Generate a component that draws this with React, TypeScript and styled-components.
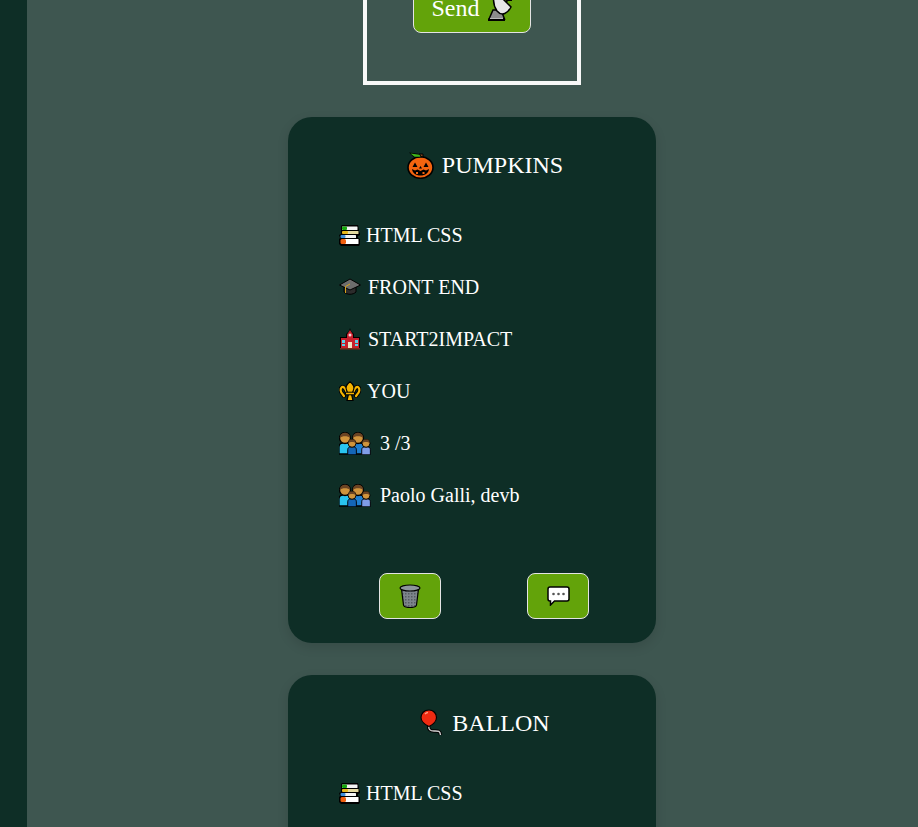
import React from "react";
import styled, { createGlobalStyle } from "styled-components";

const GlobalStyle = createGlobalStyle`
  html, body {
    margin: 0;
    padding: 0;
    height: 100%;
    overflow: hidden;
    background: #3e5650;
  }
`;

const Pumpkin = () => (
  <svg width="27" height="27" viewBox="0 0 27 27">
    <path d="M12 2h4v5h-4z" fill="#7c4a22" stroke="#000" />
    <ellipse cx="13.5" cy="15.500" rx="12.500" ry="10.800" fill="#f4640f" stroke="#000" strokeWidth="1.600" />
    <path d="M2 .5l11 1.500 2 3.500H7z" fill="#000" />
    <path d="M3.500 1.500l9 1.300 1 2H7.500z" fill="#3fb51a" />
    <path d="M8 10.500l2.500 4.500h-5zM19 10.500l2.500 4.500h-5zM13.500 14l1.500 2.500h-3z" fill="#000" />
    <path d="M5 17l3 1.500 2.500-1 3 1.500 3-1.500 2.500 1 3-1.500c-.5 4-3.500 6.500-8.500 6.500S5.500 21 5 17z" fill="#000" />
    <path d="M9 20h2v2H9zM15.500 20h2v2h-2z" fill="#f4640f" />
  </svg>
);

const Books = () => (
  <svg width="21" height="21" viewBox="0 0 21 21">
    <path d="M3 0h16l1 5v2l1 1v2l-2 1v2l2 1v5l-1 2H2l-2-2v-5l1-1-1-3 2-1V1z" fill="#000" />
    <rect x="3" y="1.500" width="15.500" height="3.500" rx=".5" fill="#f4f4f4" />
    <rect x="3" y="1.500" width="5" height="3.500" rx="1" fill="#16a80d" />
    <rect x="4" y="6" width="15.500" height="3" rx=".5" fill="#e3d9a0" />
    <rect x="3" y="6" width="6" height="3" rx="1" fill="#e8b81c" />
    <rect x="3" y="10" width="14" height="3" rx=".5" fill="#f4f4f4" />
    <rect x="1.500" y="10" width="5" height="3" rx="1" fill="#3f8fdc" />
    <rect x="3" y="14" width="16.500" height="5" rx=".5" fill="#ffffff" />
    <rect x="1.500" y="14" width="5.500" height="5" rx="1.500" fill="#f0600f" />
  </svg>
);

const Cap = () => (
  <svg width="22" height="18" viewBox="0 0 22 18">
    <path d="M5 8h12v6c-3 3-9 3-12 0z" fill="#2c2c2c" stroke="#000" />
    <path d="M11 1l10.500 6L11 12 .5 7z" fill="#6d6d6d" stroke="#000" />
    <path d="M11 6L6.500 8.500V15" fill="none" stroke="#d8a21a" strokeWidth="1" />
  </svg>
);

const School = () => (
  <svg width="22" height="22" viewBox="0 0 22 22">
    <path d="M11 0l1 3 3 3v3h6v12H1V9h6V6l3-3z" fill="#000" />
    <path d="M11 2l3 4.500V10h6v10H2V10h6V6.500z" fill="#c8202c" />
    <circle cx="11" cy="7" r="1.500" fill="#f3d6d6" />
    <path d="M3 12h3v3H3zM16 12h3v3h-3zM3 16h3v2H3zM16 16h3v2h-3z" fill="#5ad0e8" />
    <path d="M9 14h4v6H9z" fill="#f0e2c4" />
    <path d="M1 20h20v1.500H1z" fill="#7c2a1c" />
  </svg>
);

const fleurCurl = "M7.500 11C6.500 7 4 5 2.500 6.500 1 8 1.500 11 3.500 13L5 15";

const Fleur = () => (
  <svg width="22" height="21" viewBox="0 0 22 21">
    <g fill="none" stroke="#000" strokeWidth="4" strokeLinecap="round">
      <path d={fleurCurl} />
      <path d={fleurCurl} transform="matrix(-1 0 0 1 22 0)" />
    </g>
    <g fill="none" stroke="#f5b400" strokeWidth="2.200" strokeLinecap="round">
      <path d={fleurCurl} />
      <path d={fleurCurl} transform="matrix(-1 0 0 1 22 0)" />
    </g>
    <path d="M9.500 13L8 19.500h6L12.500 13z" fill="#f5b400" stroke="#000" strokeWidth="1.200" />
    <path d="M11 .8c3.500 2.700 5 5.700 3.300 8.700L13 13H9L7.700 9.500C6 6.500 7.500 3.500 11 .8z" fill="#f5b400" stroke="#000" strokeWidth="1.200" />
    <path d="M6.500 11.200h9v2.600h-9z" fill="#f5b400" stroke="#000" strokeWidth="1" />
  </svg>
);

const Person = ({ x, y, s, shirt }: { x: number; y: number; s: number; shirt: string }) => (
  <g transform={`translate(${x} ${y}) scale(${s})`}>
    <path d="M1 22v-7c0-3 2-4 4-4h4c2 0 4 1 4 4v7z" fill={shirt} stroke="#000" strokeWidth="1.300" />
    <circle cx="7" cy="6" r="5.500" fill="#d0943c" stroke="#000" strokeWidth="1.300" />
    <path d="M1.800 6c0-4 3.200-5.300 5.200-5.300S12.200 2 12.200 6c-2-2.500-8.400-2.500-10.400 0z" fill="#6b4423" />
  </g>
);

const Family = () => (
  <svg width="34" height="23" viewBox="0 0 34 23">
    <Person x={-1} y={0} s={1} shirt="#29c4f0" />
    <Person x={12} y={0} s={1} shirt="#1f7fd0" />
    <Person x={8} y={7} s={0.72} shirt="#1466b8" />
    <Person x={22} y={7} s={0.72} shirt="#7f9ce8" />
  </svg>
);

const Balloon = () => (
  <svg width="24" height="28" viewBox="0 0 24 28">
    <path d="M9 17c-1 3 1 5 5 5 4 0 6-.5 6.500 4" fill="none" stroke="#000" strokeWidth="3.400" />
    <path d="M9 17c-1 3 1 5 5 5 4 0 6-.5 6.500 4" fill="none" stroke="#cfcfcf" strokeWidth="1.400" />
    <path d="M9 1C4 1 1 4.500 1 8.500 1 12.500 5.500 16 9 17.500c3.500-1.500 7.500-5 7.500-9C16.500 4.500 13.500 1 9 1z" fill="#ee2b12" stroke="#000" strokeWidth="1.200" />
    <path d="M5 5c1-1 2-1.500 3-1.500" stroke="#ff9a80" strokeWidth="1.500" fill="none" />
  </svg>
);

const Trash = () => (
  <svg width="22" height="24" viewBox="0 0 22 24">
    <defs>
      <pattern id="mesh" width="3" height="3" patternUnits="userSpaceOnUse">
        <rect width="3" height="3" fill="#7d858c" />
        <rect width="1.500" height="1.500" fill="#565d63" />
      </pattern>
    </defs>
    <path d="M2.500 5l2 16c.2 2 3 2.500 6.500 2.500s6.300-.5 6.500-2.500l2-16z" fill="url(#mesh)" stroke="#000" strokeWidth="1.200" />
    <ellipse cx="11" cy="4" rx="10" ry="3" fill="#8d959b" stroke="#000" strokeWidth="1.200" />
  </svg>
);

const Speech = () => (
  <svg width="23" height="20" viewBox="0 0 23 20">
    <path d="M3 1h17c1 0 2 1 2 2v10c0 1-1 2-2 2H7.500L3.500 19v-4H3c-1 0-2-1-2-2V3c0-1 1-2 2-2z" fill="#fff" stroke="#000" strokeWidth="1.500" />
    <circle cx="6.500" cy="8" r="1.300" fill="#555" />
    <circle cx="11.500" cy="8" r="1.300" fill="#555" />
    <circle cx="16.500" cy="8" r="1.300" fill="#555" />
  </svg>
);

const Antenna = () => (
  <svg width="25" height="34" viewBox="0 0 25 34">
    <path d="M18 15l4-5M21 9l3-1M20 13l4 0" stroke="#000" strokeWidth="2" />
    <path d="M21 8h3v3" stroke="#b6c400" strokeWidth="1" fill="none" />
    <path d="M5 23h8l3.500 9H1z" fill="#8c8c8c" stroke="#000" strokeWidth="1.500" />
    <path d="M7 4l16 16c-3 6-9 10-14 4C5 18 5 10 7 4z" fill="#e6e6e6" stroke="#000" strokeWidth="1.500" />
    <path d="M0 31.500h17V34H0z" fill="#000" />
    <path d="M2 31h13v1H2z" fill="#b9b9b9" />
  </svg>
);

const Page = styled.div`
  display: flex;
  height: 827px;
  overflow: hidden;
  background: #3e5650;
  font-family: "Liberation Serif", "Times New Roman", serif;
  color: #ffffff;
`;

const Sidebar = styled.aside`
  flex: 0 0 27px;
  background: #0e2e26;
`;

const Main = styled.main`
  flex: 1;
  display: flex;
  flex-direction: column;
  align-items: center;
  gap: 32px;
  margin-top: -35px;
  padding-right: 1px;
`;

const FormBox = styled.form`
  box-sizing: border-box;
  flex: 0 0 120px;
  width: 218px;
  padding-bottom: 48px;
  border: 4px solid #f8f8f8;
  display: flex;
  justify-content: center;
  align-items: flex-end;
`;

const Button = styled.button`
  display: inline-flex;
  align-items: center;
  justify-content: center;
  box-sizing: border-box;
  height: 46px;
  border: 1px solid #e4e4e4;
  border-radius: 8px;
  background: #63a30a;
  color: #ffffff;
  font-family: inherit;
  padding: 0;
`;

const SendButton = styled(Button)`
  width: 118px;
  height: 50px;
  gap: 8px;
  font-size: 24px;
  overflow: hidden;

  svg {
    margin-top: -8px;
  }
`;

const IconButton = styled(Button)`
  width: 62px;
`;

const Card = styled.section`
  box-sizing: border-box;
  flex: 0 0 526px;
  width: 368px;
  padding: 32px 24px 24px;
  border-radius: 24px;
  background: #0e2e26;
  box-shadow: 0 4px 12px rgba(0, 0, 0, 0.12);
  display: flex;
  flex-direction: column;
`;

const Title = styled.h2<{ $gap: number }>`
  margin: 0;
  padding-left: 26px;
  height: 32px;
  display: flex;
  align-items: center;
  justify-content: center;
  gap: ${(props) => props.$gap}px;
  font-size: 24px;
  font-weight: 400;
`;

const List = styled.ul`
  list-style: none;
  margin: 41px 0 0;
  padding: 0 0 0 27px;
  display: flex;
  flex-direction: column;
  gap: 26px;
`;

const Row = styled.li<{ $gap: number }>`
  height: 26px;
  display: flex;
  align-items: center;
  gap: ${(props) => props.$gap}px;
  font-size: 20px;
  white-space: nowrap;
`;

const Actions = styled.div`
  margin: auto 0 0 24px;
  display: flex;
  justify-content: space-around;
`;

const TeamRows = ({ people, count }: { people: string; count: string }) => (
  <List>
    <Row $gap={6}><Books />HTML CSS</Row>
    <Row $gap={7}><Cap />FRONT END</Row>
    <Row $gap={7}><School />START2IMPACT</Row>
    <Row $gap={6}><Fleur />YOU</Row>
    <Row $gap={7}><Family />{count}</Row>
    <Row $gap={7}><Family />{people}</Row>
  </List>
);

const teams = [
  { name: "PUMPKINS", icon: <Pumpkin />, gap: 8, people: "Paolo Galli, devb", count: "3 /3" },
  { name: "BALLON", icon: <Balloon />, gap: 8, people: "Paolo Galli", count: "1 /3" },
];

export default function App() {
  return (
    <>
      <GlobalStyle />
      <Page>
        <Sidebar />
        <Main>
          <FormBox onSubmit={(e) => e.preventDefault()}>
            <SendButton type="submit">
              Send <Antenna />
            </SendButton>
          </FormBox>
          {teams.map((team) => (
            <Card key={team.name}>
              <Title $gap={team.gap}>
                {team.icon}
                {team.name}
              </Title>
              <TeamRows people={team.people} count={team.count} />
              <Actions>
                <IconButton type="button" aria-label="Delete"><Trash /></IconButton>
                <IconButton type="button" aria-label="Chat"><Speech /></IconButton>
              </Actions>
            </Card>
          ))}
        </Main>
      </Page>
    </>
  );
}
